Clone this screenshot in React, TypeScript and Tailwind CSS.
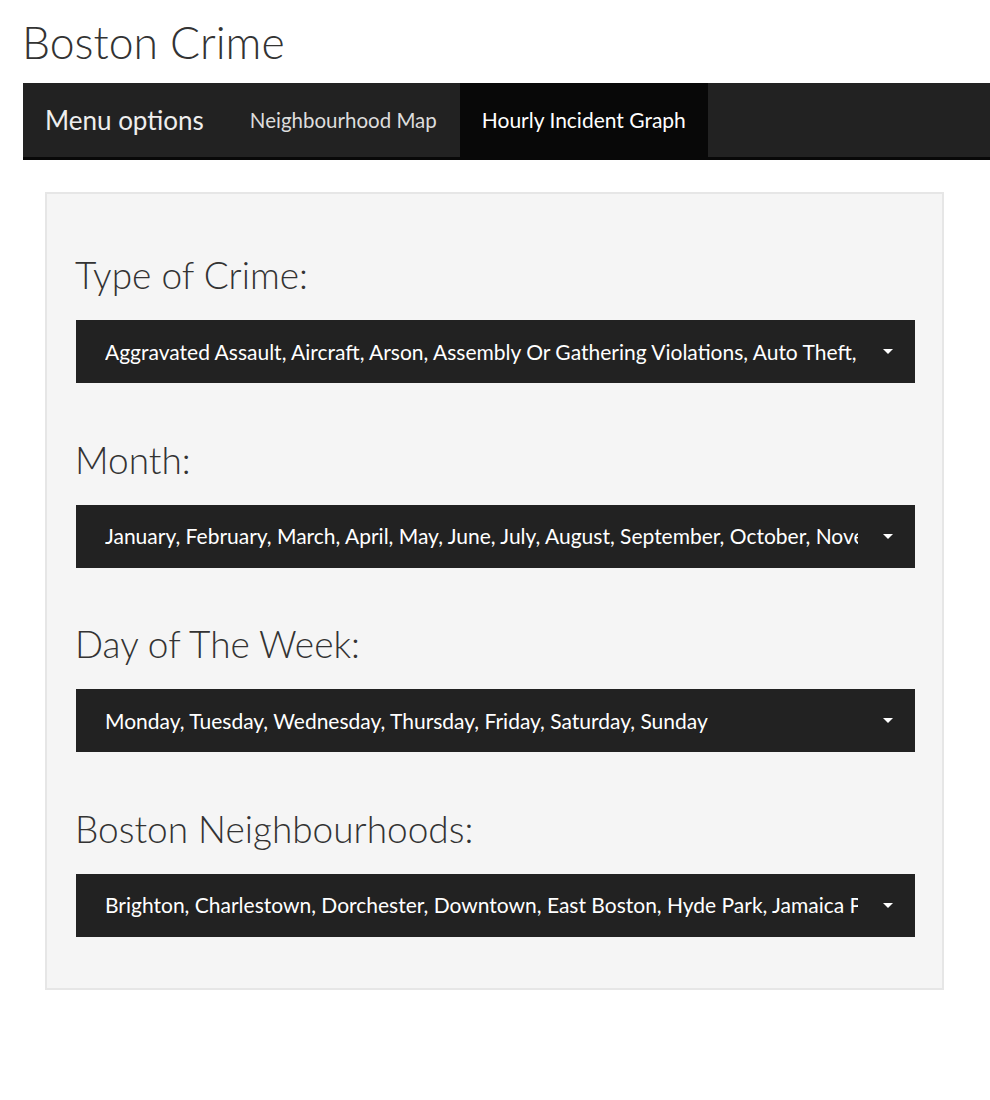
import React from 'react';

const filters = [
  {
    label: 'Type of Crime:',
    value:
      'Aggravated Assault, Aircraft, Arson, Assembly Or Gathering Violations, Auto Theft, Ballistics, Bomb Hoax, Burglary - No Property Taken, Commercial Burglary',
  },
  {
    label: 'Month:',
    value:
      'January, February, March, April, May, June, July, August, September, October, November, December',
  },
  {
    label: 'Day of The Week:',
    value: 'Monday, Tuesday, Wednesday, Thursday, Friday, Saturday, Sunday',
  },
  {
    label: 'Boston Neighbourhoods:',
    value:
      'Brighton, Charlestown, Dorchester, Downtown, East Boston, Hyde Park, Jamaica Plain, Mattapan, Roxbury, South Boston, South End, West Roxbury',
  },
];

const App: React.FC = () => {
  return (
    <div className="min-h-[1100px] w-full overflow-hidden bg-white font-['Lato','Open_Sans',sans-serif] text-[#333]">
      <h1 className="ml-[22px] pt-[13px] text-[44.5px] font-light leading-[58px]">Boston Crime</h1>

      <nav className="ml-[23px] mt-[12px] flex h-[77px] border-b-[3px] border-[#080808] bg-[#222]">
        <div className="flex items-center pl-[22px] pr-[23px] text-[26px] text-[#eee]">Menu options</div>
        <a className="flex items-center px-[23px] text-[20.5px] text-[#ddd]">Neighbourhood Map</a>
        <a className="flex items-center bg-[#080808] px-[22px] text-[21px] text-white">Hourly Incident Graph</a>
      </nav>

      <div className="ml-[45px] mt-[32px] w-[899px] border-2 border-[#e6e6e6] bg-[#f5f5f5] pb-[51px] pl-[29px] pr-[27px] pt-[57px]">
        <div className="flex flex-col gap-[52.5px]">
          {filters.map((f) => (
            <div key={f.label} className="flex flex-col gap-[21px]">
              <label className="ml-[-1px] text-[37px] font-light leading-[48px] text-[#333]">{f.label}</label>
              <div className="flex h-[63px] items-center bg-[#222] pl-[29px] pr-[22px]">
                <span className="min-w-0 flex-1 overflow-hidden whitespace-nowrap text-[21px] text-white">
                  {f.value}
                </span>
                <span className="ml-[25px] h-0 w-0 border-x-[5px] border-t-[5px] border-x-transparent border-t-white" />
              </div>
            </div>
          ))}
        </div>
      </div>
    </div>
  );
};

export default App;
